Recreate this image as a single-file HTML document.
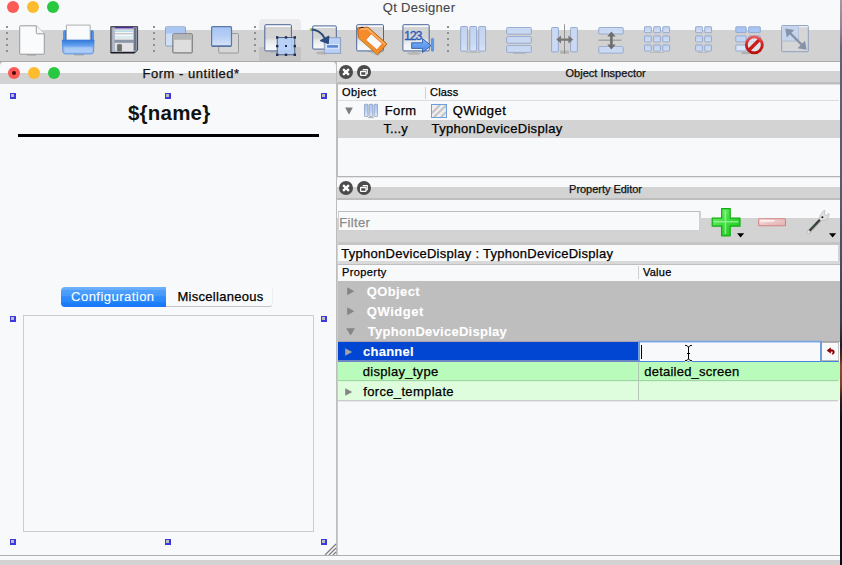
<!DOCTYPE html>
<html><head><meta charset="utf-8">
<style>
*{margin:0;padding:0;box-sizing:border-box}
html,body{width:842px;height:565px;overflow:hidden}
body{background:#f8f9fb;font-family:"Liberation Sans",sans-serif;font-size:13px;color:#000;position:relative}
.abs{position:absolute}
.t{position:absolute;white-space:nowrap;line-height:1;color:#000;-webkit-text-stroke:0.25px currentColor}
.tl{position:absolute;width:12px;height:12px;border-radius:50%}
.h{position:absolute;width:6px;height:6px;background:#3a3adf}
.h i{position:absolute;left:1px;top:1px;width:3px;height:3px;background:#bdbdc4}
.dot{position:absolute;width:2px;height:2px;background:#8f8f8f}
svg{position:absolute;overflow:visible}
</style></head><body>

<!-- ===== main title + toolbar ===== -->
<div class="abs" style="left:0;top:30px;width:840px;height:31px;background:#d2d2d2"></div>
<div class="abs" style="left:0;top:61px;width:840px;height:1px;background:#ababab"></div>
<div class="tl" style="left:7px;top:1px;background:#fc5b57"></div>
<div class="tl" style="left:27px;top:1px;background:#fdbc2e"></div>
<div class="tl" style="left:47px;top:1px;background:#28c840"></div>
<div class="t" id="qtd" style="left:382.8px;letter-spacing:0.28px;top:1px;font-size:13px;color:#464646;-webkit-text-stroke:0.1px currentColor">Qt Designer</div>

<!-- toolbar placeholder -->
<div id="toolbar"><svg id="tb" style="left:0;top:0" width="842" height="62" viewBox="0 0 842 62">
<defs>
<linearGradient id="gbl" x1="0" y1="0" x2="0" y2="1"><stop offset="0" stop-color="#a6c4f4"/><stop offset="0.45" stop-color="#b4cdf5"/><stop offset="1" stop-color="#d6e3f7"/></linearGradient>
<linearGradient id="gcell" x1="0" y1="0" x2="0" y2="1"><stop offset="0" stop-color="#c3d4f0"/><stop offset="0.7" stop-color="#cbdaf2"/><stop offset="1" stop-color="#d9e4f6"/></linearGradient>
<linearGradient id="gbar" x1="0" y1="0" x2="0" y2="1"><stop offset="0" stop-color="#dbe6f7"/><stop offset="0.3" stop-color="#c6d7f1"/><stop offset="1" stop-color="#cfddf3"/></linearGradient>
<linearGradient id="gsq" x1="0" y1="0" x2="0" y2="1"><stop offset="0" stop-color="#f8f9fb"/><stop offset="0.07" stop-color="#f8f9fb"/><stop offset="0.075" stop-color="#d3d3d3"/><stop offset="0.5" stop-color="#d4d4d5"/><stop offset="0.62" stop-color="#e6e7e9"/><stop offset="0.8" stop-color="#f3f4f6"/><stop offset="1" stop-color="#f8f9fb"/></linearGradient>
<linearGradient id="gtray" x1="0" y1="0" x2="0" y2="1"><stop offset="0" stop-color="#3579d8"/><stop offset="0.35" stop-color="#5b9cec"/><stop offset="0.55" stop-color="#8fbaf3"/><stop offset="1" stop-color="#b4d0f6"/></linearGradient>
<linearGradient id="gno" x1="0" y1="0" x2="0" y2="1"><stop offset="0" stop-color="#ea5a5a"/><stop offset="0.5" stop-color="#d01f1f"/><stop offset="1" stop-color="#b80f0f"/></linearGradient>
<linearGradient id="garr" x1="0" y1="0" x2="0" y2="1"><stop offset="0" stop-color="#7db2f6"/><stop offset="1" stop-color="#4a88e4"/></linearGradient>
</defs>
<!-- pressed button bg -->
<path d="M259 30 V23 Q259 19 263 19 H297 Q301 19 301 23 V30 Z" fill="#eaeaec"/>
<rect x="259" y="30" width="42" height="17" fill="#d3d3d3"/>
<rect x="259" y="47" width="42" height="14" fill="#c3c3c3"/>
<!-- separators -->
<g fill="#8f8f8f">
<g id="dots"><rect x="6" y="26" width="2" height="2"/><rect x="6" y="32" width="2" height="2"/><rect x="6" y="38" width="2" height="2"/><rect x="6" y="44" width="2" height="2"/><rect x="6" y="50" width="2" height="2"/></g>
<use href="#dots" x="147"/><use href="#dots" x="248"/><use href="#dots" x="441"/>
</g>
<!-- new -->
<rect x="27" y="54.2" width="9" height="1.3" fill="#9c9c9c"/>
<path d="M20.3 25.8 H36.3 L44.3 33.8 V53.6 Q44.3 54.2 43.7 54.2 H20.3 Q19.7 54.2 19.7 53.6 V26.4 Q19.7 25.8 20.3 25.8 Z" fill="#fafbfc" stroke="#9a9a9a" stroke-width="1"/>
<path d="M36.3 25.8 V32.6 Q36.3 33.8 37.5 33.8 H44.3" fill="#f4f5f7" stroke="#9a9a9a" stroke-width="1"/>
<!-- open -->
<rect x="74" y="54.2" width="10" height="1.2" fill="#a8a8a8"/>
<path d="M63 40 V32 Q63 30 65 30 H92 Q94 30 94 32 V40 Z" fill="#4f95ec"/>
<rect x="65.2" y="31" width="1.3" height="9" fill="#2f6fcc"/><rect x="90.5" y="31" width="1.3" height="9" fill="#2f6fcc"/>
<path d="M66.4 40 V25.1 H90.2 V40" fill="#f9fafc" stroke="#a6a6a6" stroke-width="0.9"/>
<path d="M62.3 40 H94.1 L93.5 51.6 Q93.3 53.9 91 53.9 H65.4 Q63.1 53.9 62.9 51.6 Z" fill="url(#gtray)" stroke="#3a7cdc" stroke-width="0.7"/>
<rect x="64" y="46.8" width="29" height="6.2" rx="1" fill="#b4d0f7" opacity="0.6" stroke="#5c98ea" stroke-width="0.5"/>
<!-- save -->
<path d="M110.8 26.6 H137.6 V50 L134.6 53 H110.8 Z" fill="#8d95a8" stroke="#33333c" stroke-width="0.9"/>
<rect x="110.8" y="52" width="24" height="1.2" fill="#1c1c22"/>
<rect x="112.3" y="28" width="2" height="24" fill="#b6bccb"/><rect x="134" y="28" width="2" height="22" fill="#6e7588"/>
<rect x="114.7" y="27" width="18.7" height="13" fill="#f6f7f9"/>
<rect x="114.7" y="27" width="18.7" height="1.5" fill="#4a2ea0"/>
<rect x="114.7" y="29" width="18.7" height="1.6" fill="#c9cbd0"/>
<rect x="114.7" y="31" width="18.7" height="0.8" fill="#9fd8e8"/>
<rect x="114.7" y="33" width="18.7" height="1.4" fill="#c6c8cc"/>
<rect x="114.7" y="36.6" width="18.7" height="0.8" fill="#a8dcea"/>
<rect x="114.7" y="38.6" width="18.7" height="1.4" fill="#d0d2d6"/>
<rect x="114.7" y="42.8" width="18.7" height="8.6" fill="#e3e3e6"/>
<rect x="117.4" y="44.4" width="4.2" height="6.6" rx="0.8" fill="#6e6e6e" stroke="#555" stroke-width="0.5"/>
<!-- send to back -->
<rect x="165.5" y="26.8" width="20" height="19.3" rx="0.8" fill="#cfdff6" stroke="#8aa4cc" stroke-width="1"/>
<rect x="166" y="27.3" width="19" height="6.2" fill="#a9c5f1"/>
<rect x="172.9" y="33.9" width="19.3" height="19" rx="0.8" fill="#dedede" stroke="#666" stroke-width="1"/>
<rect x="173.4" y="34.4" width="18.3" height="5.4" fill="#b5b5b5"/>
<!-- bring to front -->
<rect x="218.7" y="33.6" width="19.8" height="19.4" rx="0.8" fill="#d6d6d6" stroke="#9a9a9a" stroke-width="1"/>
<rect x="219" y="53" width="19" height="1" fill="#b4b4b4"/>
<rect x="211.6" y="26.6" width="19.9" height="19.6" rx="1" fill="url(#gbl)" stroke="#5a78a8" stroke-width="1.2"/>
<rect x="212" y="45.6" width="19" height="1.2" fill="#4f6c9c"/>
<!-- edit widgets -->
<rect x="270" y="52" width="12" height="1.2" fill="#aaa" opacity="0.6"/>
<rect x="264.8" y="24.7" width="26.6" height="26.2" rx="1" fill="url(#gsq)" stroke="#4b6598" stroke-width="1"/>
<rect x="277.2" y="37.4" width="17.6" height="17.4" fill="#b4cef6" fill-opacity="0.9" stroke="#3d4660" stroke-width="0.8"/>
<g fill="#1c2c58"><rect x="276" y="36.2" width="2.4" height="2.4"/><rect x="284.8" y="36.2" width="2.4" height="2.4"/><rect x="293.6" y="36.2" width="2.4" height="2.4"/><rect x="276" y="44.9" width="2.4" height="2.4"/><rect x="293.6" y="44.9" width="2.4" height="2.4"/><rect x="276" y="53.6" width="2.4" height="2.4"/><rect x="284.8" y="53.6" width="2.4" height="2.4"/><rect x="293.6" y="53.6" width="2.4" height="2.4"/><rect x="285" y="45" width="2" height="2"/></g>
<!-- signals/slots -->
<ellipse cx="322" cy="53" rx="6" ry="1.6" fill="#a8a8a8" opacity="0.7"/>
<rect x="312.7" y="25.9" width="23.6" height="23.2" rx="1" fill="url(#gsq)" stroke="#4b6598" stroke-width="1"/>
<rect x="324.3" y="37.7" width="16.3" height="15.6" fill="#b9d1f6" stroke="#8c9cb8" stroke-width="0.9"/>
<rect x="326.6" y="44.6" width="12" height="3.6" fill="#5b89d9" stroke="#eef3fc" stroke-width="0.9"/>
<path d="M310.5 29.5 Q320 29.5 324.5 38" fill="none" stroke="#2c4c7c" stroke-width="1.8"/>
<path d="M321 40.5 L328.6 36.6 L328 42.8 Z M320.6 40.6 L328.8 36.2 L328.2 43.5 Z" fill="#2c4c7c" stroke="#2c4c7c" stroke-width="1.2" stroke-linejoin="round"/>
<circle cx="310.6" cy="29.4" r="1.1" fill="#b8c850"/>
<!-- buddy -->
<rect x="356.7" y="24.7" width="26.8" height="26.2" rx="1" fill="url(#gsq)" stroke="#4b6598" stroke-width="1"/>
<path d="M366 51 L378 56 L384 51 Z" fill="#888" opacity="0.3"/>
<g transform="translate(370.3,38.8) rotate(41.5)"><path d="M-16.4 -0.6 L-9.4 -7.2 H15 Q16 -7.2 16 -6.2 V6.2 Q16 7.2 15 7.2 H-9.4 L-16.4 0.6 Z" fill="#f68b2c" stroke="#b46212" stroke-width="0.9"/><path d="M-15.2 -0.6 L-9 -6.3 H15 V-4.8 H-8.4 L-13.4 0 Z" fill="#fbb772" opacity="0.85"/><rect x="-2.7" y="-4.4" width="15" height="8.4" fill="#fafbfc" stroke="#ee7618" stroke-width="0.9"/><rect x="-10" y="5.9" width="26" height="1.2" fill="#d8a038" opacity="0.75"/></g>
<path d="M359.6 28.8 Q360.6 26.4 363.6 27.6" fill="none" stroke="#222" stroke-width="1"/>
<!-- tab order -->
<ellipse cx="414" cy="53.4" rx="7" ry="1.4" fill="#a6a6a6" opacity="0.7"/>
<rect x="402.9" y="24.7" width="26.3" height="26.2" rx="1" fill="url(#gsq)" stroke="#4b6598" stroke-width="1"/>
<text x="404" y="39.6" font-family="Liberation Sans, sans-serif" font-size="12.4" fill="#2a5cb8" stroke="#2a5cb8" stroke-width="0.35" letter-spacing="-1.1">123</text>
<path d="M411.6 42.8 H422.5 V38.6 L431 45.6 L422.5 52.6 V48.4 H411.6 Z" fill="url(#garr)" stroke="#2f5fae" stroke-width="0.9" stroke-linejoin="round"/>
<rect x="431.4" y="38.4" width="2.2" height="12.8" rx="0.8" fill="#5f9bee" stroke="#3b6fc4" stroke-width="0.5"/>
<!-- hlayout -->
<g fill="url(#gcell)" stroke="#8ea4cc" stroke-width="0.9">
<rect x="460.7" y="26.5" width="6.8" height="24.6" rx="0.7"/><rect x="469.8" y="26.5" width="6.8" height="24.6" rx="0.7"/><rect x="478.8" y="26.5" width="6.8" height="24.6" rx="0.7"/>
</g>
<rect x="466" y="51.8" width="14" height="1" fill="#b0b0b0" opacity="0.8"/>
<!-- vlayout -->
<g fill="url(#gbar)" stroke="#8ea4cc" stroke-width="0.9">
<rect x="506.7" y="27.5" width="24.6" height="6.6" rx="0.7"/><rect x="506.7" y="36.6" width="24.6" height="6.6" rx="0.7"/><rect x="506.7" y="45.7" width="24.6" height="6.6" rx="0.7"/>
</g>
<rect x="513" y="53" width="12" height="1" fill="#b0b0b0" opacity="0.8"/>
<!-- hsplit -->
<rect x="560" y="50.6" width="9" height="3" fill="#b4b4b4"/>
<g fill="#cbdaf2" stroke="#8ea4cc" stroke-width="0.9"><rect x="551.6" y="27.5" width="6.8" height="24.4" rx="0.7"/><rect x="570.6" y="27.5" width="6.8" height="24.4" rx="0.7"/></g>
<rect x="564.1" y="24.3" width="0.9" height="29.6" fill="#8a8a8a"/>
<path d="M556.2 39.6 L561 35.6 V38.4 H568.4 V35.6 L573.2 39.6 L568.4 43.6 V40.8 H561 V43.6 Z" fill="#777"/>
<!-- vsplit -->
<g fill="url(#gbar)" stroke="#8ea4cc" stroke-width="0.9"><rect x="598.8" y="27.5" width="24.4" height="6.5" rx="0.7"/><rect x="598.8" y="46.6" width="24.4" height="6.5" rx="0.7"/></g>
<rect x="598.4" y="39.7" width="23" height="0.9" fill="#8a8a8a"/>
<path d="M611.4 31.4 L615.6 36.4 H612.7 V44.4 H615.6 L611.4 49.4 L607.2 44.4 H610.1 V36.4 H607.2 Z" fill="#6e6e6e"/>
<!-- grid -->
<g fill="url(#gcell)" stroke="#8ea4cc" stroke-width="0.9">
<g id="gr3"><rect x="644.5" y="26.7" width="6.8" height="6" rx="0.6"/><rect x="644.5" y="35.9" width="6.8" height="6" rx="0.6"/><rect x="644.5" y="45" width="6.8" height="6" rx="0.6"/></g>
<use href="#gr3" x="9.15"/><use href="#gr3" x="18.3"/>
<use href="#gr3" x="51.1"/><use href="#gr3" x="60.25"/>
</g>
<rect x="650" y="52" width="14" height="1" fill="#b4b4b4" opacity="0.8"/><rect x="698" y="52" width="10" height="1" fill="#b4b4b4" opacity="0.8"/>
<!-- break layout -->
<g stroke="#8ea4cc" stroke-width="0.9">
<rect x="735.8" y="26.8" width="10.4" height="5.8" rx="0.6" fill="#a9c5f3"/><rect x="748.7" y="26.8" width="11.6" height="5.8" rx="0.6" fill="#a9c5f3"/>
<rect x="735.8" y="35.9" width="10.4" height="6" rx="0.6" fill="#c2d5f3"/><rect x="748.7" y="35.9" width="11.6" height="6" rx="0.6" fill="#c2d5f3"/>
<rect x="735.8" y="45" width="10.4" height="6" rx="0.6" fill="#dbe6f8"/>
</g>
<ellipse cx="746" cy="53" rx="5" ry="1.2" fill="#a0a0a0" opacity="0.7"/>
<circle cx="754.3" cy="44.8" r="8" fill="#e4e8f0" fill-opacity="0.7"/>
<path d="M748.9 50.2 L759.7 39.4" stroke="#cc1a1a" stroke-width="3.4"/>
<circle cx="754.3" cy="44.8" r="8" fill="none" stroke="url(#gno)" stroke-width="2.8"/>
<!-- adjust size -->
<rect x="781.7" y="25.6" width="26.6" height="26.1" rx="0.8" fill="#d6d6d6" stroke="#8ea0c0" stroke-width="1"/>
<rect x="782.2" y="26.1" width="25.6" height="1.2" fill="#eceef2"/>
<rect x="782.2" y="26.1" width="16.3" height="14.7" fill="#c5d5ee"/>
<rect x="798.3" y="26.2" width="0.6" height="14.6" fill="#aab4c6"/><rect x="782.2" y="40.6" width="16.4" height="0.8" fill="#aab4c6"/>
<path d="M789 32 L803 46" stroke="#8792a8" stroke-width="2.4"/>
<path d="M785.2 28.4 L794.2 30 L786.8 37.4 Z M806.6 49.8 L797.6 48.2 L805 40.8 Z" fill="#8792a8"/>
</svg>
</div>

<!-- ===== form window ===== -->
<div id="form">
<!-- corner behind rounded title -->
<div class="abs" style="left:0;top:62px;width:337px;height:6px;background:#bcbcbc"></div>
<div class="abs" style="left:0;top:62px;width:336px;height:11px;background:#f8f9fb;border-radius:4px 4px 0 0"></div>
<div class="abs" style="left:0;top:73px;width:336px;height:11px;background:#d3d3d3"></div>
<div class="tl" style="left:8px;top:67px;background:#fc5b57"><i style="position:absolute;left:4px;top:4px;width:4px;height:4px;border-radius:50%;background:#4d0a08"></i></div>
<div class="tl" style="left:28px;top:67px;background:#fdbc2e"></div>
<div class="tl" style="left:48px;top:67px;background:#28c840"></div>
<div class="t" id="ftitle" style="left:142.5px;letter-spacing:0.52px;top:67px;font-size:13px;color:#111">Form - untitled*</div>
<!-- divider -->
<div class="abs" style="left:336px;top:62px;width:1px;height:494px;background:#bdbdbd"></div>
<div class="abs" style="left:337px;top:84px;width:1px;height:472px;background:#cbcbcb"></div>
<!-- handles -->
<div class="h" style="left:10px;top:93px"><i></i></div>
<div class="h" style="left:165px;top:93px"><i></i></div>
<div class="h" style="left:321px;top:93px"><i></i></div>
<div class="h" style="left:10px;top:316px"><i></i></div>
<div class="h" style="left:321px;top:316px"><i></i></div>
<div class="h" style="left:10px;top:539px"><i></i></div>
<div class="h" style="left:165px;top:539px"><i></i></div>
<div class="h" style="left:321px;top:539px"><i></i></div>
<!-- name -->
<div class="t" id="nm" style="left:128.0px;letter-spacing:0.21px;top:103px;font-size:20.5px;font-weight:bold;color:#111;-webkit-text-stroke:0">${name}</div>
<div class="abs" style="left:18px;top:134px;width:301px;height:3px;background:#000"></div>
<!-- tabs -->
<div class="abs" style="left:61px;top:287px;width:105px;height:19.5px;border-radius:4px 0 0 4px;background:linear-gradient(#6fb1fc 0,#64abfc 14%,#4ea0fb 17%,#4499fb 44%,#318dfb 48%,#2a88fb 74%,#1d7efa 78%,#1877f8 100%)"></div>
<div class="abs" style="left:166px;top:287px;width:107px;height:20px;border-radius:0 4px 4px 0;background:#f9fafc;border-bottom:1px solid #c4c4c6;border-right:1px solid #eeeef0"></div>
<div class="t" id="tab1" style="left:71.1px;letter-spacing:0.47px;top:290px;font-size:13px;color:#fff;-webkit-text-stroke:0.1px currentColor">Configuration</div>
<div class="t" id="tab2" style="left:177.5px;letter-spacing:0.28px;top:290px;font-size:13px;color:#000">Miscellaneous</div>
<!-- pane -->
<div class="abs" style="left:23px;top:315px;width:291px;height:217px;border:1px solid #cdcdcd"></div>
<!-- grip -->
<svg style="left:324px;top:543px" width="12" height="12" viewBox="0 0 12 12"><g stroke="#7e7e7e" stroke-width="1.3"><line x1="1" y1="12" x2="12" y2="1"/><line x1="5" y1="12" x2="12" y2="5"/><line x1="9" y1="12" x2="12" y2="9"/></g></svg>
</div>

<!-- ===== right docks ===== -->
<div id="docks">
<!-- Object inspector title -->
<div class="abs" style="left:337px;top:71px;width:503px;height:11px;background:#d3d3d3"></div>
<div class="abs" style="left:337px;top:82px;width:503px;height:2px;background:#bdbdbd"></div>
<div class="abs" style="left:338px;top:84px;width:502px;height:1px;background:#dcdcde"></div>
<svg style="left:338px;top:64px" width="16" height="16" viewBox="0 0 16 16"><circle cx="8" cy="8" r="7" fill="#4b4b4b"/><path d="M5.1 5.1 L10.9 10.9 M10.9 5.1 L5.1 10.9" stroke="#fff" stroke-width="2.3" stroke-linecap="butt"/></svg>
<svg style="left:356px;top:64px" width="16" height="16" viewBox="0 0 16 16"><circle cx="8" cy="8" r="7" fill="#4b4b4b"/><path d="M6.7 5.6 H11.3 V9.6 H10.4" fill="none" stroke="#fff" stroke-width="1.1"/><rect x="4.6" y="7.5" width="5.4" height="3.8" rx="0.6" fill="none" stroke="#fff" stroke-width="1.3"/></svg>
<div class="t" id="oit" style="left:565.5px;letter-spacing:0.01px;top:68px;font-size:11px;color:#111">Object Inspector</div>
<!-- tree frame -->
<div class="abs" style="left:337px;top:84px;width:1px;height:93px;background:#bdbdbd"></div>
<div class="abs" style="left:338px;top:100px;width:501px;height:1px;background:#dcdcdc"></div>
<div class="abs" style="left:425px;top:87px;width:1px;height:12px;background:#d0d0d0"></div>
<div class="t" id="oh1" style="left:342.0px;letter-spacing:0.47px;top:87px;font-size:11px">Object</div>
<div class="t" id="oh2" style="left:430.0px;letter-spacing:0.2px;top:87px;font-size:11px">Class</div>
<!-- row 1 -->
<svg style="left:345px;top:107px" width="8" height="8" viewBox="0 0 8 8"><path d="M0.2 0.5 H7.8 L4.4 7.1 Q4 7.6 3.6 7.1 Z" fill="#7c7c7c"/></svg>
<svg id="ic_form" style="left:363px;top:103px" width="16" height="16" viewBox="363 103 16 16"><defs><linearGradient id="gfi" x1="0" y1="0" x2="0" y2="1"><stop offset="0" stop-color="#a9c6f3"/><stop offset="0.5" stop-color="#b9d1f5"/><stop offset="1" stop-color="#e2ecfa"/></linearGradient></defs><rect x="368" y="117" width="6" height="1.2" fill="#bdbdbd"/><g fill="url(#gfi)" stroke="#8d9dba" stroke-width="0.8"><rect x="364.5" y="104.3" width="3.5" height="12.2" rx="0.6"/><rect x="369.2" y="104.3" width="3.6" height="12.2" rx="0.6"/><rect x="374.1" y="104.3" width="3.4" height="12.2" rx="0.6"/></g></svg>
<div class="t" id="r1a" style="left:384.8px;letter-spacing:0.35px;top:104px;font-size:13px">Form</div>
<svg id="ic_qw" style="left:431px;top:104px" width="16" height="14" viewBox="0 0 16 14"><rect x="0.5" y="0.5" width="15" height="13" fill="#efefef" stroke="#6d9fe0" stroke-width="1"/><g stroke="#c4c4c4" stroke-width="2.2"><path d="M1 9 L9 1"/><path d="M3 13 L15 1.5"/><path d="M10 13 L15 8"/></g><rect x="0.5" y="0.5" width="15" height="13" fill="none" stroke="#6d9fe0" stroke-width="1"/></svg>
<div class="t" id="r1b" style="left:452.7px;letter-spacing:0.42px;top:104px;font-size:13px">QWidget</div>
<!-- row 2 -->
<div class="abs" style="left:338px;top:120px;width:502px;height:18px;background:#d3d3d3"></div>
<div class="t" id="r2a" style="left:383.4px;letter-spacing:0.14px;top:122px;font-size:13px">T...y</div>
<div class="t" id="r2b" style="left:431.6px;letter-spacing:0.31px;top:122px;font-size:13px">TyphonDeviceDisplay</div>
<div class="abs" style="left:337px;top:176px;width:503px;height:1px;background:#b4b4b4"></div>

<!-- Property editor title -->
<div class="abs" style="left:337px;top:177px;width:503px;height:41px;background:#f8f9fb"></div>
<div class="abs" style="left:337px;top:177px;width:503px;height:1px;background:#e6e6e8"></div>
<div class="abs" style="left:337px;top:187px;width:503px;height:11px;background:#d3d3d3"></div>
<div class="abs" style="left:337px;top:198px;width:503px;height:2px;background:#bdbdbd"></div>
<svg style="left:338px;top:180px" width="16" height="16" viewBox="0 0 16 16"><circle cx="8" cy="8" r="7" fill="#4b4b4b"/><path d="M5.1 5.1 L10.9 10.9 M10.9 5.1 L5.1 10.9" stroke="#fff" stroke-width="2.3" stroke-linecap="butt"/></svg>
<svg style="left:356px;top:180px" width="16" height="16" viewBox="0 0 16 16"><circle cx="8" cy="8" r="7" fill="#4b4b4b"/><path d="M6.7 5.6 H11.3 V9.6 H10.4" fill="none" stroke="#fff" stroke-width="1.1"/><rect x="4.6" y="7.5" width="5.4" height="3.8" rx="0.6" fill="none" stroke="#fff" stroke-width="1.3"/></svg>
<div class="t" id="pet" style="left:569.1px;letter-spacing:-0.03px;top:184px;font-size:11px;color:#111">Property Editor</div>
<!-- filter band -->
<div class="abs" style="left:337px;top:218px;width:503px;height:46px;background:#d3d3d3"></div>
<div class="abs" style="left:338px;top:242px;width:502px;height:3px;background:#c5c5c5"></div>
<div class="abs" style="left:338px;top:211px;width:362px;height:20px;background:#f8f9fb;border:1px solid #d0d0d0;border-top-color:#bdbdbd"></div>
<div class="t" id="flt" style="left:339.3px;letter-spacing:0.32px;top:216px;font-size:13px;color:#8a8a8a">Filter</div>
<div id="pebtns"><svg style="left:700px;top:200px" width="142" height="46" viewBox="700 200 142 46">
<defs><linearGradient id="gpl" x1="0" y1="0" x2="1" y2="1"><stop offset="0" stop-color="#7af07a"/><stop offset="0.5" stop-color="#3cdc3c"/><stop offset="1" stop-color="#1fc01f"/></linearGradient>
<linearGradient id="gmn" x1="0" y1="0" x2="1" y2="1"><stop offset="0" stop-color="#fdf0f0"/><stop offset="0.5" stop-color="#ecc4c4"/><stop offset="1" stop-color="#e4b0b0"/></linearGradient></defs>
<rect x="700" y="211" width="1" height="7" fill="#cfcfcf"/>
<path d="M721.6 208.6 H730.2 V218.2 H740 V226.2 H730.2 V235.8 H721.6 V226.2 H712.2 V218.2 H721.6 Z" fill="url(#gpl)" stroke="#0fae0f" stroke-width="1.2" stroke-linejoin="round"/>
<path d="M725.4 210.5 V234 M714 221.8 H738.4" stroke="#a4f6a4" stroke-width="1.6" opacity="0.75"/>
<path d="M737 233.2 H744.2 L740.6 237.6 Z" fill="#000"/>
<rect x="758.7" y="218.7" width="26.8" height="7" rx="0.8" fill="url(#gmn)" stroke="#d48484" stroke-width="1.1"/>
<rect x="760.5" y="220.2" width="14" height="1.4" fill="#fff" opacity="0.8"/>
<!-- wrench -->
<path d="M809 231.6 L820.4 219.6" stroke="#9a9a9a" stroke-width="3.4" stroke-linecap="round"/>
<path d="M809.6 230.6 L820.2 219.4" stroke="#333" stroke-width="1.9"/>
<path d="M810.6 229 L815 224.4" stroke="#2e6a3a" stroke-width="0.9"/>
<circle cx="808.6" cy="232" r="1.5" fill="#ececec" stroke="#aaa" stroke-width="0.5"/>
<path d="M819.6 219.4 Q819.2 215.4 821.8 213.2 Q822.6 210.6 825 210.4 L824.2 214 L826.2 215.6 L829 213.4 Q829.6 216.6 827.4 218.6 Q824.8 220.6 822.6 220.4 Q820.6 221.2 819.6 219.4 Z" fill="#e2e2e2" stroke="#b4b4b4" stroke-width="0.7"/>
<circle cx="822.4" cy="217.3" r="1" fill="#111"/>
<path d="M829 233.2 H836.2 L832.6 237.6 Z" fill="#000"/>
</svg></div>
<!-- class label -->
<div class="abs" style="left:338px;top:245px;width:500px;height:16px;background:#f8f9fb"></div>
<div class="abs" style="left:338px;top:261px;width:502px;height:3px;background:#d9d9da"></div>
<div class="abs" style="left:338px;top:264px;width:502px;height:1px;background:#bfbfbf"></div>
<div class="t" id="cls" style="left:341.2px;letter-spacing:0.28px;top:247px;font-size:13px">TyphonDeviceDisplay : TyphonDeviceDisplay</div>
<!-- property header -->
<div class="abs" style="left:638px;top:266px;width:1px;height:13px;background:#cfcfcf"></div>
<div class="t" id="ph1" style="left:342.0px;letter-spacing:0.4px;top:267px;font-size:11px">Property</div>
<div class="t" id="ph2" style="left:642.9px;letter-spacing:0.27px;top:267px;font-size:11px">Value</div>
<!-- rows -->
<div class="abs" style="left:338px;top:281px;width:502px;height:60px;background:#bebebe"></div>
<svg style="left:347px;top:287.3px" width="8" height="9" viewBox="0 0 8 9"><path d="M0.2 0.2 V8.3 L7.3 4.25 Z" fill="#858585"/></svg>
<svg style="left:347px;top:307.3px" width="8" height="9" viewBox="0 0 8 9"><path d="M0.2 0.2 V8.3 L7.3 4.25 Z" fill="#858585"/></svg>
<svg style="left:346px;top:328px" width="10" height="8" viewBox="0 0 10 8"><path d="M0.2 0.2 H9 L4.6 7.4 Z" fill="#858585"/></svg>
<div class="t" id="g1" style="left:366.8px;letter-spacing:0.37px;top:285px;font-size:13px;font-weight:bold;color:#fff;-webkit-text-stroke:0.1px currentColor">QObject</div>
<div class="t" id="g2" style="left:366.8px;letter-spacing:0.54px;top:305px;font-size:13px;font-weight:bold;color:#fff;-webkit-text-stroke:0.1px currentColor">QWidget</div>
<div class="t" id="g3" style="left:367.8px;letter-spacing:0.27px;top:325px;font-size:13px;font-weight:bold;color:#fff;-webkit-text-stroke:0.1px currentColor">TyphonDeviceDisplay</div>
<!-- channel -->
<div class="abs" style="left:338px;top:341px;width:502px;height:1px;background:#a9a2b0"></div>
<div class="abs" style="left:338px;top:342px;width:301px;height:18px;background:#0046d2"></div>
<div class="abs" style="left:338px;top:360px;width:301px;height:2px;background:#6f86c6"></div>
<svg style="left:345px;top:348.2px" width="8" height="9" viewBox="0 0 8 9"><path d="M0.2 0.2 V7.7 L7.3 3.95 Z" fill="#a4a4a4"/></svg>
<div class="t" id="p1" style="left:363.1px;letter-spacing:0.23px;top:345px;font-size:13px;font-weight:bold;color:#fff;-webkit-text-stroke:0.1px currentColor">channel</div>
<div class="abs" style="left:638px;top:340px;width:184px;height:22px;background:#f8f9fb;border:2px solid #6c9edb;border-top-width:3px;border-top-color:#79a6de;border-bottom-width:1px;border-bottom-color:#4a84da;border-radius:1px"></div>
<div class="abs" style="left:638px;top:340px;width:184px;height:1px;background:#a9b8cf"></div>
<div class="abs" style="left:640px;top:342px;width:180px;height:1px;background:#bcd3f0"></div>
<div class="abs" style="left:822px;top:361px;width:17px;height:1px;background:#4a84da"></div>
<div class="abs" style="left:641px;top:345px;width:1px;height:14px;background:#000"></div>
<div id="ibeam"><svg style="left:684px;top:344px" width="10" height="18" viewBox="684 344 10 18">
<path d="M685 345.3 Q687.8 345.3 688.5 347.2 Q689.2 345.3 692 345.3 M688.5 347 V359 M685 360.7 Q687.8 360.7 688.5 358.8 Q689.2 360.7 692 360.7 M687 353.5 H690" fill="none" stroke="#fff" stroke-width="2.4" opacity="0.9"/>
<path d="M685 345.3 Q687.8 345.3 688.5 347.2 Q689.2 345.3 692 345.3 M688.5 347 V359 M685 360.7 Q687.8 360.7 688.5 358.8 Q689.2 360.7 692 360.7 M687 353.5 H690" fill="none" stroke="#000" stroke-width="1"/>
</svg></div>
<div id="reset"><div class="abs" style="left:822px;top:342px;width:17px;height:19px;background:#f8f9fb;border-top:1px solid #b4b4b4;border-right:1px solid #c4c4c4;border-bottom:1px solid #b8b8b8"></div>
<svg style="left:826px;top:347px" width="10" height="9" viewBox="826 347 10 9"><path d="M827 350.5 L830.6 347.8 V349.6 Q834.4 349.4 834.4 352 Q834.4 354.2 832.4 354.4 L832.2 353.2 Q833 353 833 352 Q833 351.2 830.6 351.4 V353.2 Z" fill="#8b0000" stroke="#8b0000" stroke-width="0.5" stroke-linejoin="round"/></svg></div>
<!-- display_type -->
<div class="abs" style="left:338px;top:362px;width:502px;height:18px;background:#b9fbba"></div>
<div class="abs" style="left:338px;top:380px;width:502px;height:2px;background:#cdfdce"></div>
<div class="abs" style="left:338px;top:380px;width:500px;height:1px;background:#a9cfaa"></div>
<div class="t" id="p2" style="left:362.8px;letter-spacing:0.28px;top:365px;font-size:13px">display_type</div>
<div class="t" id="v2" style="left:644.3px;letter-spacing:0.22px;top:365px;font-size:13px">detailed_screen</div>
<!-- force_template -->
<div class="abs" style="left:338px;top:382px;width:502px;height:18px;background:#ddfddd"></div>
<div class="abs" style="left:338px;top:400px;width:500px;height:1px;background:#cccccc"></div>
<div class="abs" style="left:338px;top:401px;width:500px;height:1px;background:#e6e8e8"></div>
<div class="abs" style="left:638px;top:362px;width:1px;height:39px;background:#b4c6b4"></div>
<svg style="left:345px;top:388px" width="8" height="9" viewBox="0 0 8 9"><path d="M0.2 0.2 V7.8 L7.3 4.00 Z" fill="#858585"/></svg>
<div class="t" id="p3" style="left:363.3px;letter-spacing:0.33px;top:385px;font-size:13px">force_template</div>
</div>

<!-- bottom / right edges -->
<div class="abs" style="left:0;top:555px;width:840px;height:1px;background:#b0b0b0"></div>
<div class="abs" style="left:0;top:560px;width:840px;height:5px;background:#d2d2d2"></div>
<div class="abs" style="left:840px;top:0;width:2px;height:565px;background:linear-gradient(#a8969a 0px,#8c8298 30px,#606079 48px,#57576d 200px,#3e3e52 320px,#1c1c26 345px,#4a2a20 358px,#8a4a2e 366px,#7a4028 385px,#2a1c1c 400px,#0c0e1a 420px,#0a0c18 565px)"></div>
</body></html>
